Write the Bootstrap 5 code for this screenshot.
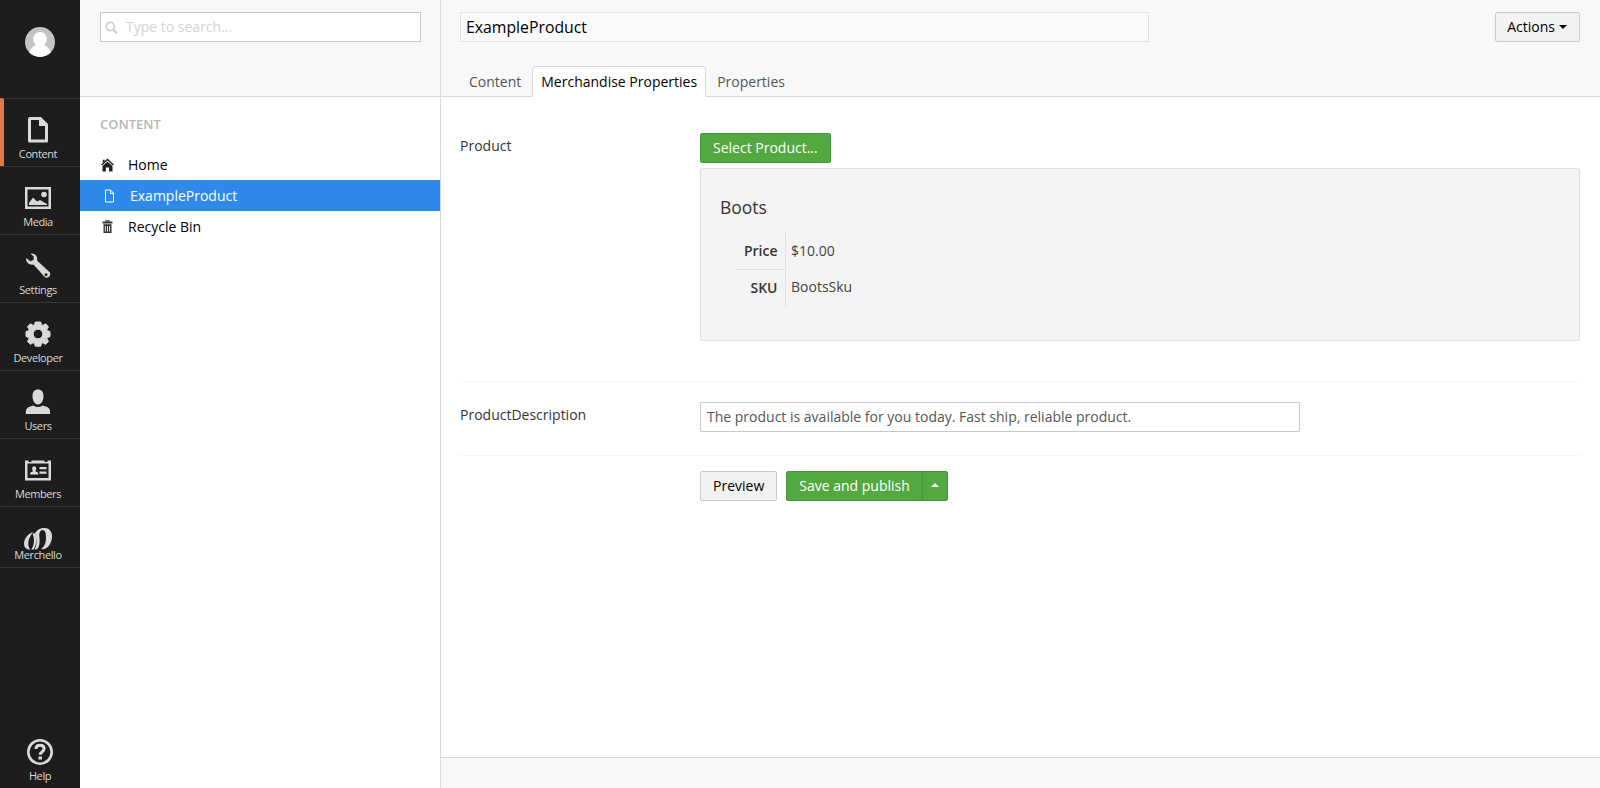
<!DOCTYPE html>
<html lang="en">
<head>
<meta charset="utf-8">
<title>ExampleProduct</title>
<link rel="stylesheet" href="https://cdn.jsdelivr.net/npm/bootstrap@5.3.0/dist/css/bootstrap.min.css">
<style>
body{font-family:"Open Sans",sans-serif;font-size:14px;line-height:20px;color:#343434;height:100vh;overflow:hidden}
.rail{width:80px;background:#1d1d1d}
.rail svg{display:block;fill:#d9d9d9}
.avatar-box{height:98px;padding-top:27px}
.rail .nav-link{height:68px;padding:16px 4px 0 0;border-top:1px solid #343434;color:#d9d9d9;font-size:11px;line-height:16px;letter-spacing:-.4px}
.rail .nav-link.active{border-left:4px solid #e07c43;padding-left:0;padding-right:8px}
.rail .nav-link svg{margin-bottom:3px}
.rail .merch{height:62px;border-bottom:1px solid #343434;padding-top:20px}
.rail .merch svg{margin-bottom:-3px}
.help-link{color:#d9d9d9;font-size:11px;line-height:16px;padding-bottom:4px;letter-spacing:-.4px}
.help-link svg{margin-bottom:2px}
.tree{width:361px;border-right:1px solid #d9d9d9}
.top-bar{height:97px;background:#f8f8f8;border-bottom:1px solid #d9d9d9}
.search-box{margin:12px 19px 0 20px;height:30px;background:#fff;border:1px solid #c6c6c6;padding:0 4px}
.search-box input{font-size:14px;padding:0 0 2px 8px;height:28px;border:0;background:none;border-radius:0;box-shadow:none}
.search-box input::placeholder{color:#d3d3d3}
.tree h5{font-size:13px;font-weight:600;color:#b5b5b5;margin:17px 0 15px 20px;line-height:20px}
.tree-row{height:31px;padding:0 20px;color:#000;border:0;background:none}
.tree-row svg{width:14px;margin-right:14px}
.tree-row.picked{background:#2e8aea;color:#fff;padding-left:22px;font-weight:500}
.name-input{width:689px;height:30px;border:1px solid #e2e2e2;border-radius:0;background:#f9f9f9;font-size:15.8px;padding:0 5px 1px;color:#000}
.btn{font-size:14px;line-height:20px;padding:4px 12px;border-radius:2px}
.btn-plain{background:#f2f2f2;border-color:#c9c9c9;color:#000}
.btn-go{background:#53a93f;border-color:#45933a;color:#fff}
.nav-tabs{border:0;margin-bottom:-1px;padding-left:19px}
.nav-tabs .nav-link{height:31px;padding:5px 8px 3px;color:#555;border-radius:4px 4px 0 0;line-height:20px;margin:0 2px 0 0}
.nav-tabs .nav-link.active{color:#000;border-color:#d9d9d9 #d9d9d9 #fff}
.caret-down,.caret-up{display:inline-block;border:4px solid transparent}
.caret-down{border-top-color:currentColor;border-bottom:0;vertical-align:middle;margin-left:4px;margin-top:-2px}
.caret-up{border-bottom-color:currentColor;border-top:0;vertical-align:middle;margin-top:-4px}
.actions-btn{padding-left:11px}
.editor{padding:36px 20px 0 19px}
.prop{border-bottom:1px solid #f6f6f6}
.prop-label{width:240px;padding-top:3px}
.panel-box{background:#f4f4f4;border:1px solid #e1e1e1;border-radius:2px;height:173px;padding:28px 19px 0 19px;margin-top:5px}
.panel-box h4{font-size:17.500px;font-weight:400;line-height:20px;margin:0 0 15px;color:#343434}
.facts{margin-left:16px;border-collapse:collapse}
.facts th{font-weight:600;text-align:right;width:49px;height:37px;padding:0 7px 0 0;border-right:1px solid #e0e0e0}
.facts tr:first-child th{border-bottom:1px solid #e0e0e0;padding-top:2px}
.facts td{padding:0 0 0 5.500px;color:#444}
.facts tr:last-child td{padding-bottom:2px}
.desc-input{width:600px;height:30px;border:1px solid #c9c9c9;border-radius:1px;font-size:14px;padding:0 6px 2px;color:#555}
.foot-bar{height:31px;background:#f8f8f8;border-top:1px solid #d9d9d9}
</style>
</head>
<body class="d-flex bg-white">
<nav class="rail d-flex flex-column flex-shrink-0 h-100">
  <div class="avatar-box d-flex justify-content-center align-items-start">
    <svg width="30" height="30" viewBox="0 0 30 30"><defs><clipPath id="face"><circle cx="15" cy="15" r="15"/></clipPath></defs><g clip-path="url(#face)"><rect width="30" height="30" fill="#c4c4c4"/><path fill="#fff" d="M15 5c4 0 6.700 3 6.700 7 0 2.600-1 4.600-2.500 5.900C23 19.500 25.500 22 27 30H3c1.500-8 4-10.500 7.800-12.100C9.300 16.600 8.300 14.600 8.300 12c0-4 2.700-7 6.700-7z"/></g></svg>
  </div>
  <a class="nav-link active d-flex flex-column align-items-center" href="#"><svg width="26" height="28" viewBox="0 0 26 28"><path fill-rule="evenodd" d="M5 2h11l7 7v17.500q0 1-1 1H4.500q-1.500 0-1.500-1.500V4q0-2 2-2zM6 5v19.500h14V11h-6V5z"/></svg>Content</a>
  <a class="nav-link d-flex flex-column align-items-center" href="#"><svg width="26" height="28" viewBox="0 0 26 28"><path fill-rule="evenodd" d="M0 4h26v22H0zM2.500 6.500v17h21v-17z"/><circle cx="19" cy="11.500" r="2.800"/><path d="M4 22v-2l4-5.500 4 4 3-1.500 7 4v1z"/></svg>Media</a>
  <a class="nav-link d-flex flex-column align-items-center" href="#"><svg width="26" height="28" viewBox="0 0 26 28"><path fill-rule="evenodd" d="M5.500 2.700C9 1.500 13 4.500 12 9.500L24.500 21c2.500 3-1.500 7.500-4.800 5L8.500 13.500C4.500 14.500.5 11.500 1.200 7l4 3.200L8.500 9l.3-3.500zM21 22.300a1.500 1.500 0 1 0 .1 3 1.500 1.500 0 0 0-.1-3z"/></svg>Settings</a>
  <a class="nav-link d-flex flex-column align-items-center" href="#"><svg width="26" height="28" viewBox="0 0 26 28"><path stroke="#d9d9d9" stroke-width="1" stroke-linejoin="round" fill-rule="evenodd" d="M10.300 3h5.400l.8 2.800 1.400.6 2.700-1.600 2.900 2.900-1.600 2.700.6 1.400 2.500.8v5l-2.500.8-.6 1.400 1.600 2.700-2.900 2.900-2.700-1.600-1.400.6-.8 2.800h-5.400l-.8-2.800-1.400-.6-2.700 1.600-2.900-2.900 1.600-2.700-.6-1.400-2.500-.8v-5l2.500-.8.6-1.400-1.600-2.700 2.900-2.900 2.700 1.600 1.400-.6zM13 10.200a4.800 4.800 0 1 0 0 9.600 4.800 4.800 0 0 0 0-9.600z"/></svg>Developer</a>
  <a class="nav-link d-flex flex-column align-items-center" href="#"><svg width="26" height="28" viewBox="0 0 26 28"><path d="M13 2.500c3.500 0 5.500 2.500 5.500 6.500 0 4-1.800 8.500-5.500 8.500S7.500 13 7.500 9C7.500 5 9.500 2.500 13 2.500zM.8 27c0-6 1-6.800 7.500-8.600 3 2 6.400 2 9.400 0 6.500 1.800 7.500 2.600 7.500 8.600z"/></svg>Users</a>
  <a class="nav-link d-flex flex-column align-items-center" href="#"><svg width="26" height="28" viewBox="0 0 26 28"><path fill-rule="evenodd" d="M0 5.500h3.500V7h3V5.500h13V7h3V5.500H26V25.500H0zM2.500 8.500v14.500h21V8.500z"/><path d="M14.500 12h7v2.300h-7zM14.500 16.500h7v2.300h-7zM5 19.500c0-2 1-2.700 3.200-3.200-1.700-2-1.200-5 1-5s2.700 3 1 5c2.200.5 3.200 1.200 3.200 3.200z"/></svg>Members</a>
  <a class="nav-link merch d-flex flex-column align-items-center" href="#"><svg width="30" height="23" viewBox="0 0 30 23"><path d="M10.500 5C5 6.500 1 11.500 1 17c0 3 1.800 5 4.200 5.500h2.300C5.800 21 5 18.500 5.300 15.500 5.700 11.500 7.500 8 10.500 5z"/><path d="M9.500 7c2 3.500 2.200 11-1.200 15.500h2.200c3.300-4 3.300-12.500 1.500-16.500z"/><path fill-rule="evenodd" d="M12 6.500C14 2.500 17.500 1 21.500 1 26 1 29 4 29 9.500 29 16 25 22 19 22.500l-.5-.8c3-2 4.500-6 4.500-11.200 0-4.500-1-7.500-3.300-7.500-2.500 0-3.700 3-3.300 7 .5 5.500.3 11-3.200 12.500h-1.700c2.500-3.500 2.500-10 .5-16z"/></svg>Merchello</a>
  <a class="help-link mt-auto text-decoration-none d-flex flex-column align-items-center" href="#"><svg width="28" height="28" viewBox="0 0 28 28"><circle cx="14" cy="14" r="11.700" fill="none" stroke="#d9d9d9" stroke-width="2.600"/><path d="M10 11c0-2.500 1.600-3.700 4-3.700s4.100 1.300 4.100 3.500c0 3-3.800 2.900-3.800 6" fill="none" stroke="#d9d9d9" stroke-width="3"/><path d="M12.500 18.500h3.500v3h-3.500z"/></svg>Help</a>
</nav>
<aside class="tree flex-shrink-0 h-100">
  <div class="top-bar d-flex align-items-start">
    <div class="search-box d-flex align-items-center flex-grow-1">
      <svg width="13" height="13" viewBox="0 0 13 13" class="flex-shrink-0" fill="none" stroke="#cfcfcf"><circle cx="5.200" cy="5.500" r="4.200" stroke-width="1.700"/><path d="M8.300 8.700l3.700 3.600" stroke-width="2.400"/></svg>
      <input class="form-control" placeholder="Type to search...">
    </div>
  </div>
  <h5>CONTENT</h5>
  <div class="d-flex flex-column">
    <div class="tree-row d-flex align-items-center"><svg height="14" viewBox="0 0 14 14" fill="#222"><path d="M7.500 .5l6.400 6-1 1.100L7.500 2.600 2.100 7.600l-1-1.100z"/><path d="M7.500 3.800L12.500 8v5.500H9.100V9.600H5.900v3.900H2.500V8zM2.800 1.800h1.800v1.600L2.800 5z"/></svg>Home</div>
    <div class="tree-row picked d-flex align-items-center"><svg height="14" viewBox="0 0 14 14" fill="none" stroke="#fff"><path d="M3.500 1h5l3 3v9h-8zM8.500 1v3.500h3"/></svg>ExampleProduct</div>
    <div class="tree-row d-flex align-items-center"><svg height="14" viewBox="0 0 14 14" fill="#333"><path fill-rule="evenodd" d="M5.500 0h4v1.500h3v2h-10v-2h3zM6.500 .8v.7h2V.8zM3.500 4.300h8V13h-8zM4.900 6v5.500h.9V6zM7.050 6v5.500h.9V6zM9.200 6v5.500h.9V6z"/></svg>Recycle Bin</div>
  </div>
</aside>
<main class="d-flex flex-column flex-grow-1 h-100">
  <header class="top-bar d-flex flex-column justify-content-between flex-shrink-0">
    <div class="d-flex justify-content-between" style="padding:12px 20px 0 19px">
      <input class="name-input form-control" value="ExampleProduct">
      <button class="btn btn-plain actions-btn">Actions<span class="caret-down"></span></button>
    </div>
    <ul class="nav nav-tabs">
      <li><a class="nav-link" href="#">Content</a></li>
      <li><a class="nav-link active" href="#">Merchandise Properties</a></li>
      <li><a class="nav-link" href="#">Properties</a></li>
    </ul>
  </header>
  <section class="editor flex-grow-1">
    <div class="prop d-flex pb-4 mb-0" style="height:249px">
      <div class="prop-label flex-shrink-0">Product</div>
      <div class="flex-grow-1">
        <button class="btn btn-go d-block">Select Product...</button>
        <div class="panel-box">
          <h4>Boots</h4>
          <table class="facts">
            <tr><th>Price</th><td>$10.00</td></tr>
            <tr><th>SKU</th><td>BootsSku</td></tr>
          </table>
        </div>
      </div>
    </div>
    <div class="prop d-flex" style="height:74px;padding-top:20px">
      <div class="prop-label flex-shrink-0">ProductDescription</div>
      <input class="desc-input form-control" value="The product is available for you today. Fast ship, reliable product.">
    </div>
    <div class="d-flex" style="padding:15px 0 0 240px">
      <button class="btn btn-plain">Preview</button>
      <div class="btn-group" style="margin-left:9px">
        <button class="btn btn-go">Save and publish</button>
        <button class="btn btn-go px-2"><span class="caret-up"></span></button>
      </div>
    </div>
  </section>
  <footer class="foot-bar flex-shrink-0"></footer>
</main>
<script src="https://cdn.jsdelivr.net/npm/bootstrap@5.3.0/dist/js/bootstrap.bundle.min.js"></script>
</body>
</html>
